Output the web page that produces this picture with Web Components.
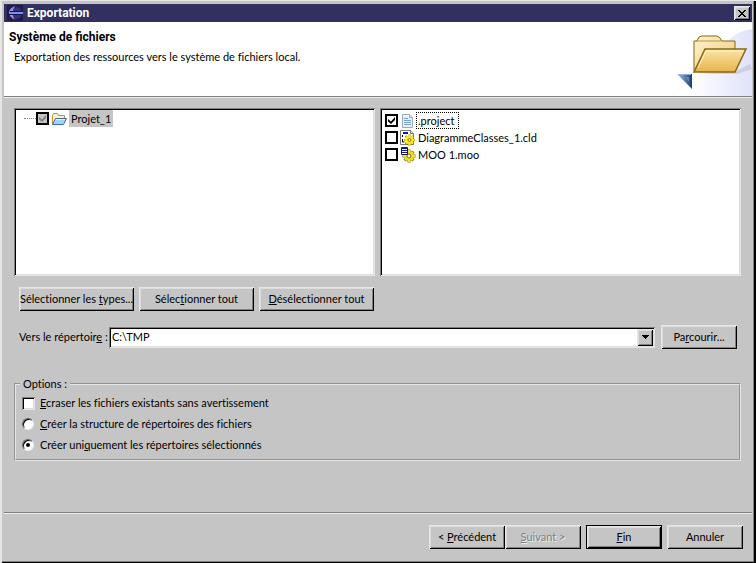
<!DOCTYPE html>
<html lang="fr">
<head>
<meta charset="utf-8">
<meta name="viewport" content="width=device-width, initial-scale=1">
<title>Exportation</title>
<style>
  :root{
    --face:#c6c5c6; --shadow:#808080; --title:#31305f;
    --bold:700 12px/16px Roboto,"Liberation Sans",sans-serif;
    --sunken:inset 1px 1px #808080, inset -1px -1px #e6e6e6, inset 2px 2px #000, inset -2px -2px #dcdcdc;
    --raised:inset 1px 1px #e6e6e6, inset -1px -1px #000, inset 2px 2px #dcdcdc, inset -2px -2px #808080;
  }
  body{margin:0;font:11px/16px Lato,"Liberation Sans",sans-serif;font-variant-ligatures:none;color:#000;background:var(--face)}
</style>
</head>
<body>
<dialog-window caption="Exportation">
  <wizard-header slot="header" heading="Système de fichiers">Exportation des ressources vers le système de fichiers local.</wizard-header>
  <list-pane tree>
    <check-item tree selected checked grayed icon="folder">Projet_1</check-item>
  </list-pane>
  <list-pane>
    <check-item checked focused icon="file">.project</check-item>
    <check-item icon="diagram">DiagrammeClasses_1.cld</check-item>
    <check-item icon="model">MOO 1.moo</check-item>
  </list-pane>
  <push-button slot="select" wide>Sélectionner les <u>t</u>ypes...</push-button>
  <push-button slot="select" wide>Sélec<u>t</u>ionner tout</push-button>
  <push-button slot="select" wide><u>D</u>ésélectionner tout</push-button>
  <combo-field slot="target" value="C:\TMP">Vers le répertoir<u>e</u> :</combo-field>
  <push-button slot="target">Pa<u>r</u>courir...</push-button>
  <option-group slot="options"></option-group>
  <push-button slot="back">&lt; <u>P</u>récédent</push-button>
  <push-button slot="back" disabled><u>S</u>uivant &gt;</push-button>
  <push-button slot="actions" default><u>F</u>in</push-button>
  <push-button slot="actions">Annuler</push-button>
</dialog-window>

<script>
const ICONS = {
  folder:`<svg width="16" height="16" viewBox="0 0 16 16"><path d="M1.500 13V4.500l1-2h4l1 2h6V7" fill="#fff3c4" stroke="#c28f35"/><path d="M1.500 13.500 4.500 7.500h11l-3 6z" fill="#a9d1f5" stroke="#3f69b0"/><path d="M5 8.500h9" stroke="#e4f5ff"/></svg>`,
  file:`<svg width="16" height="16" viewBox="0 0 16 16"><path d="M2.500 1.500h7l3 3v10h-10z" fill="#e8f1fc" stroke="#9aaabf"/><path d="M9.500 1.500v3h3" fill="#f7e6b8" stroke="#c1a66d"/><path d="M4 5.500h4M4 7.500h7M4 9.500h7M4 11.500h7" stroke="#7c9dd0"/></svg>`,
  diagram:`<svg width="16" height="16" viewBox="0 0 16 16"><path d="M.5 .5h10l3 3v11H.5z" fill="#fff" stroke="#777"/><path d="M10.500 .5v3h3" fill="#ddd" stroke="#777"/><path d="M3 3h5" stroke="#1515b0" stroke-width="2"/><path d="M2.500 5v2M2.500 9v3h2" fill="none" stroke="#000"/><g transform="translate(9.500 10)"><path d="M0-5.500V5.500M-5.500 0H5.500M-4-4 4 4M4-4-4 4" stroke="#8a7600" stroke-width="2"/><path d="M0-5V5M-5 0H5M-3.500-3.500 3.500 3.500M3.500-3.500-3.500 3.500" stroke="#ffe91f" stroke-width="2"/><circle r="3.500" fill="#ffe91f"/><circle r="1.500" fill="#fff" stroke="#8a7600"/></g></svg>`,
  model:`<svg width="16" height="16" viewBox="0 0 16 16"><g transform="translate(9 9)"><path d="M0-6.500V6.500M-6.500 0H6.500M-4.500-4.500 4.500 4.500M4.500-4.500-4.500 4.500" stroke="#7b6a00" stroke-width="3"/><path d="M0-6V6M-6 0H6M-4-4 4 4M4-4-4 4" stroke="#f8e51a" stroke-width="2"/><circle r="4" fill="#f8e51a"/><circle r="2" fill="#fff" stroke="#7b6a00"/></g><path d="M1.500.500h6v7h-6z" fill="#fff" stroke="#151570"/><path d="M2 1.500h5M2 3.500h5M2 5.500h5" stroke="#151590"/></svg>`
};

class DialogWindow extends HTMLElement{
  constructor(){ super(); this.attachShadow({mode:'open'}); }
  connectedCallback(){
    this.shadowRoot.innerHTML = `
      <style>
        :host{display:flex;flex-direction:column;box-sizing:border-box;min-height:100vh;padding:4px 4px 3px;background:var(--face);
          box-shadow:inset 2px 1px #e6e6e6,inset -2px -1px #000,inset -3px -2px #808080}
        .bar{display:flex;align-items:center;gap:4px;height:18px;padding:0 2px 0 3px;background:var(--title);color:#fff;font:var(--bold)}
        .bar h1{flex:1;margin:0;font:inherit}
        .close{display:grid;place-items:center;width:16px;height:14px;padding:0;border:0;background:var(--face);box-shadow:var(--raised)}
        svg{display:block}
        main{display:flex;flex:1;flex-direction:column;padding:11px 11px 0 10px}
        .lists{display:flex;flex:1;gap:5px;min-height:120px}
        .lists ::slotted(*){flex:1}
        .select{display:flex;gap:5px;padding:11px 5px 0}
        .target{display:flex;align-items:center;gap:6px;padding:14px 4px 0 5px}
        .options{padding:27px 0 51px}
        footer{display:flex;justify-content:flex-end;gap:5px;padding:12px 9px 11px;border-top:1px solid var(--shadow);box-shadow:inset 0 1px #eee}
        .back,.actions{display:flex}
        .actions{gap:5px}
      </style>
      <div class="bar">
        <svg width="16" height="16" viewBox="0 0 16 16"><path fill="#211a4b" d="M0 0h16v16H0z"/><circle cx="9" cy="8" r="6" fill="#3a2f7c"/><path d="M8 1C3 3 2 6 2 8s2 5 6 7C5 11 5 5 8 1" fill="#9d93da"/><path d="M3 6.500h12M2 9.500h13" stroke="#15134a"/><path d="M2 8h14" stroke="#7393f1" stroke-width="2"/></svg>
        <h1>${this.getAttribute('caption')}</h1>
        <button class="close" aria-label="Fermer"><svg width="8" height="7" viewBox="0 0 8 7" shape-rendering="crispEdges"><path d="M0 0h2v1h1v1h2V1h1V0h2v1H7v1H6v1H5v1h1v1h1v1h1v1H6V6H5V5H3v1H2v1H0V6h1V5h1V4h1V3H2V2H1V1H0z"/></svg></button>
      </div>
      <slot name="header"></slot>
      <main>
        <div class="lists"><slot></slot></div>
        <div class="select"><slot name="select"></slot></div>
        <div class="target"><slot name="target"></slot></div>
        <div class="options"><slot name="options"></slot></div>
      </main>
      <footer><div class="back"><slot name="back"></slot></div><div class="actions"><slot name="actions"></slot></div></footer>
    `;
  }
}
customElements.define('dialog-window', DialogWindow);

class WizardHeader extends HTMLElement{
  constructor(){ super(); this.attachShadow({mode:'open'}); }
  connectedCallback(){
    this.shadowRoot.innerHTML = `
      <style>
        :host{display:flex;justify-content:space-between;height:74px;background:#fff;border-bottom:1px solid var(--shadow);box-shadow:0 1px #eee}
        .text{padding:7px 0 0 5px}
        h2,p{margin:0;font:inherit}
        h2{font:var(--bold)}
        p{padding:4px 0 0 5px}
        svg{display:block;flex:none}
      </style>
      <div class="text"><h2>${this.getAttribute('heading')}</h2><p><slot></slot></p></div>
      <svg width="76" height="74" viewBox="0 0 76 74">
        <defs>
          <linearGradient id="sky"><stop offset="0" stop-color="#fff"/><stop offset="1" stop-color="#dfe3fa"/></linearGradient>
          <linearGradient id="back" x2="1" y2="1"><stop offset="0" stop-color="#fff3cf"/><stop offset="1" stop-color="#edc976"/></linearGradient>
          <linearGradient id="front" x2="0" y2="1"><stop offset="0" stop-color="#fbe5a5"/><stop offset="1" stop-color="#e6b44d"/></linearGradient>
          <linearGradient id="tip"><stop offset="0" stop-color="#a9c6e6"/><stop offset="1" stop-color="#183a7c"/></linearGradient>
        </defs>
        <path d="M15 74V52C40 45 42 12 76 7v67z" fill="url(#sky)"/>
        <path d="M60 49 74 42l2 5-15 5H24z" fill="#b9b3c9" opacity=".5"/>
        <path d="M18 49V19h3l2-4 3-1h15l3 2 2 3h13v30z" fill="url(#back)" stroke="#876616"/>
        <path d="M20 19h25" stroke="#b99545"/>
        <path d="M18 50 29 27h41L59 50z" fill="url(#front)" stroke="#876616" stroke-width="1.500"/>
        <path d="M22 46 30 29h37" fill="none" stroke="#fff4cf"/>
        <path d="M1 52h15v15z" fill="url(#tip)"/><path d="M2 52.500h13" stroke="#91b3da"/><path d="M9 55h4v5z" fill="#5c86bd"/>
      </svg>
    `;
  }
}
customElements.define('wizard-header', WizardHeader);

class ListPane extends HTMLElement{
  constructor(){ super(); this.attachShadow({mode:'open'}); }
  connectedCallback(){
    this.shadowRoot.innerHTML = `
      <style>
        :host{display:block;min-width:0;background:#fff;box-shadow:var(--sunken)}
        div{padding:4px 5px}
        :host([tree]) div{padding:2px 10px}
      </style>
      <div><slot></slot></div>
    `;
  }
}
customElements.define('list-pane', ListPane);

class CheckItem extends HTMLElement{
  constructor(){ super(); this.attachShadow({mode:'open'}); }
  connectedCallback(){
    const has = n => this.hasAttribute(n);
    this.shadowRoot.innerHTML = `
      <style>
        :host{display:block}
        label{display:flex;align-items:center;height:17px}
        :host([tree]) label::before{content:"";width:12px;border-top:1px dotted #808080}
        input{appearance:none;box-sizing:border-box;display:grid;place-items:center;flex:none;width:13px;height:13px;margin:0;border:2px solid #000;background:#fff}
        :host([grayed]) input{background:#c6c5c6}
        input:checked::before{content:"";width:7px;height:7px;background:#000;clip-path:polygon(0 29%,43% 64%,100% 0,100% 43%,43% 100%,0 64%)}
        :host([grayed]) input:checked::before{background:#808080}
        svg{display:block;flex:none;margin:0 0 0 2px}
        span{display:flex;align-items:center;box-sizing:border-box;height:17px;padding:0 1px;border:1px solid transparent}
        :host([selected]) span{margin-left:2px;background:var(--face)}
        :host([focused]) span{padding-right:4px;border:1px dotted #000}
      </style>
      <label><input type="checkbox" ${has('checked')?'checked':''}>${ICONS[this.getAttribute('icon')]}<span><slot></slot></span></label>
    `;
  }
}
customElements.define('check-item', CheckItem);

class PushButton extends HTMLElement{
  constructor(){ super(); this.attachShadow({mode:'open'}); }
  connectedCallback(){
    this.shadowRoot.innerHTML = `
      <style>
        :host{display:block;flex:none;width:76px}
        :host([wide]){width:115px}
        button{display:block;width:100%;height:24px;padding:0;border:0;background:var(--face);box-shadow:var(--raised);color:#000;font:inherit;line-height:22px;white-space:nowrap}
        button:disabled{color:#808080;text-shadow:1px 1px #eee}
        :host([default]) button{border:1px solid #000;line-height:20px}
      </style>
      <button ${this.hasAttribute('disabled')?'disabled':''}><slot></slot></button>
    `;
  }
}
customElements.define('push-button', PushButton);

class ComboField extends HTMLElement{
  constructor(){ super(); this.attachShadow({mode:'open'}); }
  connectedCallback(){
    const v = this.getAttribute('value');
    this.shadowRoot.innerHTML = `
      <style>
        :host{display:flex;flex:1;align-items:center;min-width:0}
        label{width:90px;white-space:nowrap}
        .box{display:grid;flex:1;height:21px;box-shadow:var(--sunken);background:#fff}
        select,.arrow{grid-area:1/1}
        select{appearance:none;width:100%;margin:0;padding:0 20px 0 3px;border:0;background:none;color:#000;font:inherit}
        .arrow{display:grid;place-items:center;justify-self:end;width:16px;margin:2px;background:var(--face);box-shadow:var(--raised);pointer-events:none}
      </style>
      <label for="dir"><slot></slot></label>
      <div class="box">
        <select id="dir"><option>${v}</option></select>
        <span class="arrow"><svg width="7" height="4" viewBox="0 0 7 4" shape-rendering="crispEdges"><path d="M0 0h7L3.500 4z"/></svg></span>
      </div>
    `;
  }
}
customElements.define('combo-field', ComboField);

class OptionGroup extends HTMLElement{
  constructor(){ super(); this.attachShadow({mode:'open'}); }
  connectedCallback(){
    this.shadowRoot.innerHTML = `
      <style>
        :host{display:block}
        fieldset{display:grid;gap:5px;min-width:0;margin:0;padding:3px 7px 6px 6px;border:2px groove #e6e6e6}
        legend{padding:0 3px;margin-left:-2px}
        label{display:flex;align-items:center;gap:5px}
        input{appearance:none;box-sizing:border-box;display:grid;place-items:center;flex:none;width:13px;height:13px;margin:0;background:#fff;box-shadow:var(--sunken)}
        input[type=radio]{width:12px;height:12px;margin-right:1px;border:1px solid;border-color:#606060 #eee #eee #606060;border-radius:50%;box-shadow:inset 1px 1px #000}
        input[type=radio]:checked::before{content:"";width:4px;height:4px;border-radius:50%;background:#000}
        input[type=checkbox]:checked::before{content:"";width:7px;height:7px;background:#000;clip-path:polygon(0 29%,43% 64%,100% 0,100% 43%,43% 100%,0 64%)}
      </style>
      <fieldset>
        <legend>Options :</legend>
        <label><input type="checkbox"><span><u>E</u>craser les fichiers existants sans avertissement</span></label>
        <label><input type="radio" name="layout"><span><u>C</u>réer la structure de répertoires des fichiers</span></label>
        <label><input type="radio" name="layout" checked><span>Créer uni<u>q</u>uement les répertoires sélectionnés</span></label>
      </fieldset>
    `;
  }
}
customElements.define('option-group', OptionGroup);
</script>
</body>
</html>
